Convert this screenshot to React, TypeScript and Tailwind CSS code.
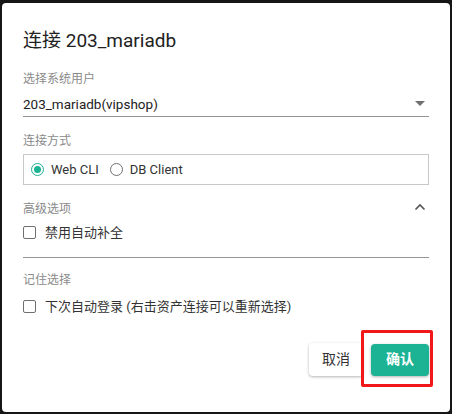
import React from 'react';

const font = { fontFamily: 'Roboto, "Noto Sans CJK SC", sans-serif' };

export default function App() {
  return (
    <div className="w-[452px] h-[414px] bg-[#161616] pt-[3px] pl-[2px]" style={font}>
      <div className="w-[448px] h-[409px] bg-white rounded-[4px] flex flex-col px-[21px] pt-[24px]">
        <h1 className="text-[19px] leading-[28px] text-[#222] font-normal">连接 203_mariadb</h1>

        <div className="mt-[16px] text-[12px] leading-[16px] text-[#8a8a8a]">选择系统用户</div>
        <div className="mt-[6px] flex items-center justify-between border-b border-[#949494] h-[24px] pb-[2px]">
          <span className="text-[13.5px] leading-[18px] text-[#222] h-[17px] overflow-hidden">203_mariadb(vipshop)</span>
          <span className="mr-[4px] w-0 h-0 border-l-[5px] border-r-[5px] border-t-[5px] border-l-transparent border-r-transparent border-t-[#707070]" />
        </div>

        <div className="mt-[16px] text-[12px] leading-[16px] text-[#8a8a8a]">连接方式</div>
        <div className="mt-[5px] h-[31px] border border-[#c8c8c8] flex items-center pl-[7px] gap-[11px] text-[13px] text-[#333]">
          <label className="flex items-center gap-[7px]">
            <span className="w-[13px] h-[13px] rounded-full border border-[#1bb394] flex items-center justify-center">
              <span className="w-[7px] h-[7px] rounded-full bg-[#1bb394]" />
            </span>
            Web CLI
          </label>
          <label className="flex items-center gap-[7px]">
            <span className="w-[13px] h-[13px] rounded-full border border-[#707070]" />
            DB Client
          </label>
        </div>

        <div className="mt-[16px] flex items-center justify-between">
          <span className="text-[12px] leading-[16px] text-[#8a8a8a]">高级选项</span>
          <svg width="12" height="8" viewBox="0 0 12 8" className="mr-[3px] mb-[5px]">
            <path d="M1.5 6.5 L6 2 L10.5 6.5" stroke="#555" strokeWidth="1.6" fill="none" />
          </svg>
        </div>
        <label className="mt-[6px] flex items-center gap-[9px] text-[13px] text-[#333]">
          <span className="w-[13px] h-[13px] border border-[#707070] rounded-[2px]" />
          禁用自动补全
        </label>
        <div className="mt-[14px] border-b border-[#949494]" />

        <div className="mt-[14px] text-[12px] leading-[16px] text-[#8a8a8a]">记住选择</div>
        <label className="mt-[9px] flex items-center gap-[9px] text-[13px] text-[#333]">
          <span className="w-[13px] h-[13px] border border-[#707070] rounded-[2px]" />
          下次自动登录 (右击资产连接可以重新选择)
        </label>

        <div className="mt-[27px] flex justify-end items-center">
          <button className="w-[54px] h-[33px] rounded-[4px] bg-white shadow-[0_1px_3px_rgba(0,0,0,0.3)] text-[14px] text-[#333] mr-[8px]">
            取消
          </button>
          <div className="relative">
            <button className="w-[58px] h-[32px] rounded-[4px] bg-[#1bb394] shadow-[0_1px_3px_rgba(0,0,0,0.3)] text-[14px] font-bold text-white">
              确认
            </button>
            <div className="absolute left-[-10px] top-[-14px] w-[72px] h-[57px] border-[3px] border-[#f01818] rounded-[2px] pointer-events-none" />
          </div>
        </div>
      </div>
    </div>
  );
}
